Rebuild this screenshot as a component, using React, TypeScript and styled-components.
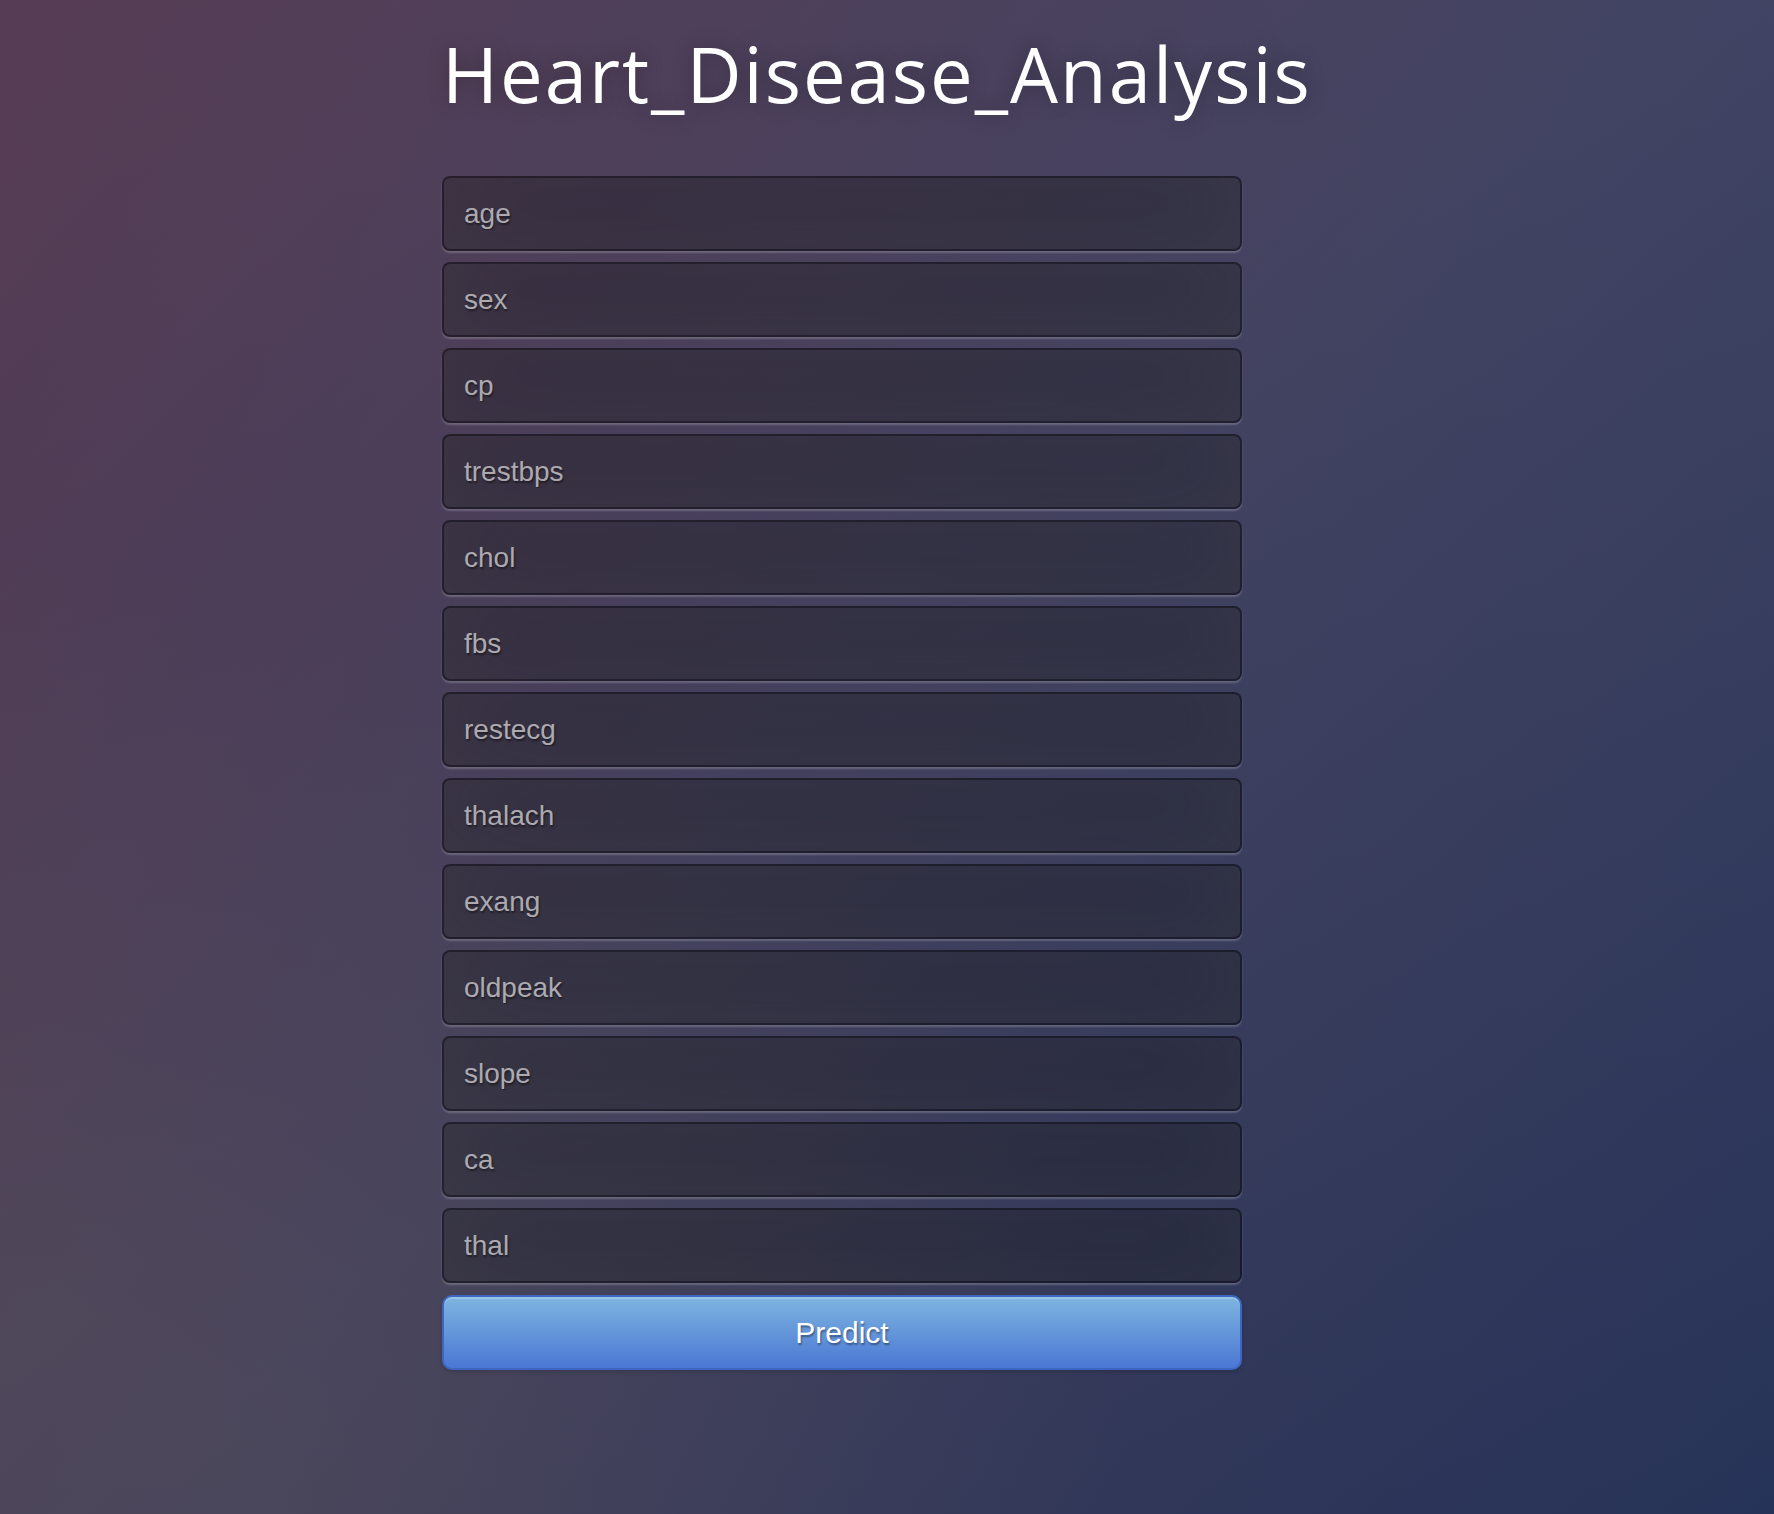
import React from "react";
import styled, { createGlobalStyle } from "styled-components";

const GlobalStyle = createGlobalStyle`
  html {
    height: 100%;
    background-color: #33304f;
    background-image:
      radial-gradient(ellipse farthest-corner at 0% 100%, rgba(110,100,95,.25) 10%, rgba(110,100,95,0) 45%),
      linear-gradient(to bottom, rgba(80,110,150,.15) 0%, rgba(80,110,150,0) 100%),
      linear-gradient(135deg, #583449 0%, #403d5a 50%, #263358 100%);
    background-attachment: fixed;
  }
  body {
    margin: 0;
    min-height: 100%;
    font-family: "Liberation Sans", Arial, sans-serif;
  }
  * { box-sizing: border-box; }
`;

const Page = styled.div`
  min-height: 1514px;
  padding: 22px 0 0 442px;
`;

const Login = styled.div`
  width: 800px;
  display: flex;
  flex-direction: column;
`;

const Title = styled.h1`
  margin: 0 0 50px 0;
  width: max-content;
  font-family: "Open Sans", "Noto Sans", sans-serif;
  font-weight: 400;
  font-size: 76px;
  line-height: 104px;
  letter-spacing: 2px;
  color: #fff;
  text-shadow: 0 0 20px rgba(0, 0, 0, 0.3);
`;

const Form = styled.form`
  display: flex;
  flex-direction: column;
  gap: 11px;
`;

const Field = styled.input`
  width: 100%;
  height: 75px;
  margin: 0;
  padding: 0 20px;
  background: rgba(0, 0, 0, 0.3);
  border: 2px solid rgba(0, 0, 0, 0.3);
  border-radius: 8px;
  outline: none;
  font-family: "Liberation Sans", Arial, sans-serif;
  font-size: 28px;
  color: #fff;
  text-shadow: 1px 1px 1px rgba(0, 0, 0, 0.3);
  box-shadow: inset 0 -10px 90px rgba(100, 100, 100, 0.2), 0 2px 2px rgba(255, 255, 255, 0.2);
  &::placeholder {
    color: #acaab0;
    opacity: 1;
    text-shadow: 1px 2px 2px rgba(0, 0, 0, 0.45);
  }
`;

const PredictButton = styled.button`
  width: 100%;
  height: 75px;
  margin-top: 1px;
  border: 2px solid #3d66c0;
  border-radius: 10px;
  background-image: linear-gradient(to bottom, #7eb5e0, #4a77d4);
  color: #fff;
  font-family: "Liberation Sans", Arial, sans-serif;
  font-size: 30px;
  text-shadow: 1px 2px 2px rgba(0, 0, 0, 0.4);
  box-shadow: inset 0 2px 0 rgba(255, 255, 255, 0.2), 0 2px 4px rgba(0, 0, 0, 0.15);
  cursor: pointer;
`;

const fields = [
  "age",
  "sex",
  "cp",
  "trestbps",
  "chol",
  "fbs",
  "restecg",
  "thalach",
  "exang",
  "oldpeak",
  "slope",
  "ca",
  "thal",
];

export default function App() {
  return (
    <>
      <GlobalStyle />
      <Page>
        <Login>
          <Title>Heart_Disease_Analysis</Title>
          <Form onSubmit={(e) => e.preventDefault()}>
            {fields.map((f) => (
              <Field key={f} type="text" name={f} placeholder={f} />
            ))}
            <PredictButton type="submit">Predict</PredictButton>
          </Form>
        </Login>
      </Page>
    </>
  );
}
